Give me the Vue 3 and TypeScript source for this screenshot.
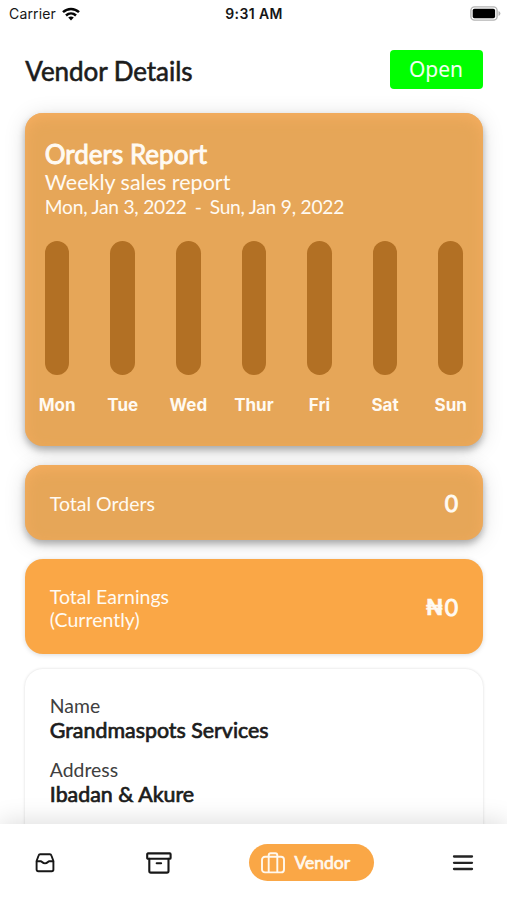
<script setup lang="ts">
interface Day {
  label: string
}

interface Detail {
  label: string
  value: string
}

const days: Day[] = ['Mon', 'Tue', 'Wed', 'Thur', 'Fri', 'Sat', 'Sun'].map((label) => ({ label }))

const details: Detail[] = [
  { label: 'Name', value: 'Grandmaspots Services' },
  { label: 'Address', value: 'Ibadan & Akure' },
]
</script>

<template>
  <div class="screen">
    <header class="status">
      <div class="carrier">
        <span>Carrier</span>
        <svg class="wifi" viewBox="0 0 18 14" fill="none" stroke="#050505" stroke-width="2.5">
          <path d="M1 5.2C5.6 0.9 12.4 0.9 17 5.2" />
          <path d="M4 8.5C6.9 5.8 11.1 5.8 14 8.5" />
          <path d="M6.2 10.6Q9 8.4 11.8 10.6L9 13.6Z" fill="#050505" stroke="none" />
        </svg>
      </div>
      <span class="clock">9:31 AM</span>
      <svg class="battery" viewBox="0 0 31 15">
        <rect x="0.9" y="0.9" width="26.2" height="13.2" rx="3.6" fill="#fff" stroke="#b4b4b4" stroke-width="1.4" />
        <rect x="2.7" y="2.7" width="22.4" height="9.6" rx="1.8" fill="#000" />
        <path d="M28.5 5V10Q30.4 9.4 30.4 7.5T28.5 5Z" fill="#b4b4b4" />
      </svg>
    </header>

    <main class="content">
      <div class="heading">
        <h1 class="title">Vendor Details</h1>
        <button class="open" type="button">Open</button>
      </div>

      <section class="card report">
        <h2 class="report-title">Orders Report</h2>
        <p class="report-sub">Weekly sales report</p>
        <p class="report-dates"><span>Mon, Jan 3, 2022</span><span>-</span><span>Sun, Jan 9, 2022</span></p>
        <div class="chart">
          <div v-for="day in days" :key="day.label" class="day">
            <div class="bar"></div>
            <span class="day-label">{{ day.label }}</span>
          </div>
        </div>
      </section>

      <section class="card orders">
        <span class="stat-label">Total Orders</span>
        <span class="stat-value">0</span>
      </section>

      <section class="card earnings">
        <span class="stat-label">Total Earnings<br />(Currently)</span>
        <span class="stat-value"><span class="naira">₦</span>0</span>
      </section>

      <section class="details">
        <div v-for="item in details" :key="item.label" class="detail">
          <span class="detail-label">{{ item.label }}</span>
          <span class="detail-value">{{ item.value }}</span>
        </div>
      </section>
    </main>

    <nav class="tabs">
      <a class="tab">
        <svg width="20" height="20" viewBox="0 0 20 20" fill="none" stroke="#171717" stroke-width="1.9" stroke-linejoin="round" stroke-linecap="round">
          <path d="M1.6 8L3.6 2.5Q4 1.3 5.2 1.3H14.8Q16 1.3 16.4 2.5L18.4 8V16.5Q18.4 18.2 16.7 18.2H3.3Q1.6 18.2 1.6 16.5Z" />
          <path d="M1.8 8.2H5.8C7 8.2 7.4 10.4 10 10.4S13 8.2 14.2 8.2H18.2" />
        </svg>
      </a>
      <a class="tab">
        <svg width="26" height="22" viewBox="0 0 26 22" fill="none" stroke="#171717" stroke-width="2.1" stroke-linejoin="round" stroke-linecap="round">
          <rect x="1.2" y="1.4" width="23.4" height="5.4" rx="0.8" />
          <path d="M3.3 6.8V19Q3.3 20.6 4.9 20.6H20.9Q22.5 20.6 22.5 19V6.8M10.7 11.2H15.1" />
        </svg>
      </a>
      <a class="tab active">
        <svg width="24" height="22" viewBox="0 0 24 22" fill="none" stroke="#fff8ed" stroke-width="1.9" stroke-linejoin="round">
          <rect x="1" y="4.8" width="22" height="15.6" rx="3" />
          <path d="M7.7 20.4V3.2Q7.7 1.2 9.7 1.2H14.3Q16.3 1.2 16.3 3.2V20.4" />
        </svg>
        <span>Vendor</span>
      </a>
      <a class="tab">
        <svg width="22" height="18" viewBox="0 0 22 18" fill="none" stroke="#242424" stroke-width="2.3" stroke-linecap="round">
          <path d="M2 2.5H20M2 8.8H20M2 15H20" />
        </svg>
      </a>
    </nav>
  </div>
</template>

<style>
body {
  margin: 0;
  overflow: hidden;
}
</style>

<style scoped>
.screen {
  display: flex;
  flex-direction: column;
  width: 507px;
  height: 900px;
  overflow: hidden;
  background: #fff;
  color: #1c1c1c;
  font-family: Lato, 'Liberation Sans', sans-serif;
}

h1,
h2,
p {
  margin: 0;
  font-weight: 400;
}

.status {
  display: grid;
  grid-template-columns: 1fr auto 1fr;
  align-items: center;
  flex: none;
  height: 27px;
  padding: 0 6px 0 9px;
  box-sizing: border-box;
  font-family: Inter, sans-serif;
  font-size: 14px;
  color: #161616;
}

.carrier {
  display: flex;
  align-items: center;
  gap: 6px;
  letter-spacing: 0.15px;
}

.wifi {
  width: 18px;
  height: 14px;
}

.clock {
  margin-right: 2px;
  font-weight: 600;
  letter-spacing: 0.4px;
}

.battery {
  justify-self: end;
  width: 31px;
  height: 15px;
}

.content {
  flex: 1;
  min-height: 0;
  padding: 23px 24.5px 0 25.3px;
  overflow: hidden;
}

.heading {
  display: flex;
  justify-content: space-between;
  align-items: center;
  height: 39px;
  margin-bottom: 24.3px;
}

.title {
  padding-top: 2px;
  font-size: 26px;
  line-height: 32px;
  letter-spacing: -0.05px;
  -webkit-text-stroke: 0.6px;
}

.open {
  width: 93px;
  height: 39px;
  padding: 0 0 1px;
  border: 0;
  border-radius: 4px;
  background: #00ff00;
  color: #f0fff0;
  font: 400 21px 'Noto Sans', sans-serif;
}

.card {
  box-sizing: border-box;
  border-radius: 18px;
  color: #fffaf2;
}

.report,
.orders {
  background: #e6a658;
  box-shadow:
    inset 0 5px 14px -1px #f6ae60,
    0 4px 7px rgba(0, 0, 0, 0.28),
    0 3px 22px rgba(0, 0, 0, 0.13);
}

.report {
  height: 333px;
  padding: 25px 19.5px 0;
}

.report-title {
  font-size: 26px;
  line-height: 32px;
  -webkit-text-stroke: 0.9px;
}

.report-sub {
  padding-top: 1px;
  font-size: 21.5px;
  line-height: 23px;
}

.report-dates {
  display: flex;
  gap: 8px;
  font-size: 19.2px;
  line-height: 26px;
  letter-spacing: -0.23px;
}

.chart {
  display: flex;
  justify-content: space-between;
  margin-top: 21px;
}

.day {
  display: flex;
  flex-direction: column;
  align-items: center;
  width: 24.6px;
}

.bar {
  width: 24.6px;
  height: 134px;
  border-radius: 13px;
  background: #b27024;
}

.day-label {
  margin-top: 18px;
  font: 700 17px/24px Inter, sans-serif;
}

.orders,
.earnings {
  display: flex;
  align-items: center;
  justify-content: space-between;
  padding: 0 24.5px;
}

.orders {
  height: 75px;
  margin-top: 19px;
  padding-top: 2px;
}

.earnings {
  position: relative;
  height: 95px;
  margin-top: 19px;
  padding-top: 2px;
  background: #faa746;
  box-shadow: 0 1px 5px rgba(0, 0, 0, 0.15);
}

.stat-label {
  font-size: 19.5px;
  line-height: 23px;
}

.stat-value {
  display: flex;
  align-items: center;
  gap: 2px;
  padding-bottom: 2px;
  font-size: 23px;
  line-height: 26px;
  -webkit-text-stroke: 0.9px;
}

.naira {
  padding-top: 1px;
  font: 700 22px/26px Inter, sans-serif;
  -webkit-text-stroke: 0.3px;
}

.details {
  display: flex;
  flex-direction: column;
  gap: 15.5px;
  height: 260px;
  margin-top: 15px;
  padding: 25.2px 24.5px;
  box-sizing: border-box;
  border-radius: 18px;
  background: #fff;
  box-shadow: 0 0 3px rgba(0, 0, 0, 0.15);
}

.detail {
  display: flex;
  flex-direction: column;
}

.detail-label {
  color: #404040;
  font-size: 19.4px;
  line-height: 24px;
}

.detail-value {
  font-size: 21.4px;
  line-height: 24px;
  -webkit-text-stroke: 0.7px;
}

.tabs {
  position: relative;
  display: grid;
  grid-template-columns: 90px 138px 166px 1fr;
  align-items: center;
  justify-items: center;
  flex: none;
  height: 76px;
  padding-top: 1px;
  box-sizing: border-box;
  background: #fff;
  box-shadow: 0 -2px 24px rgba(0, 0, 0, 0.14);
}

.tab {
  display: flex;
  align-items: center;
}

.tab:last-child {
  margin-left: 24px;
}

.active {
  gap: 10px;
  width: 125px;
  height: 37px;
  padding-left: 12px;
  box-sizing: border-box;
  border-radius: 19px;
  background: #faa746;
  color: #fff8ed;
  font-size: 17.5px;
  -webkit-text-stroke: 0.7px;
}
</style>
